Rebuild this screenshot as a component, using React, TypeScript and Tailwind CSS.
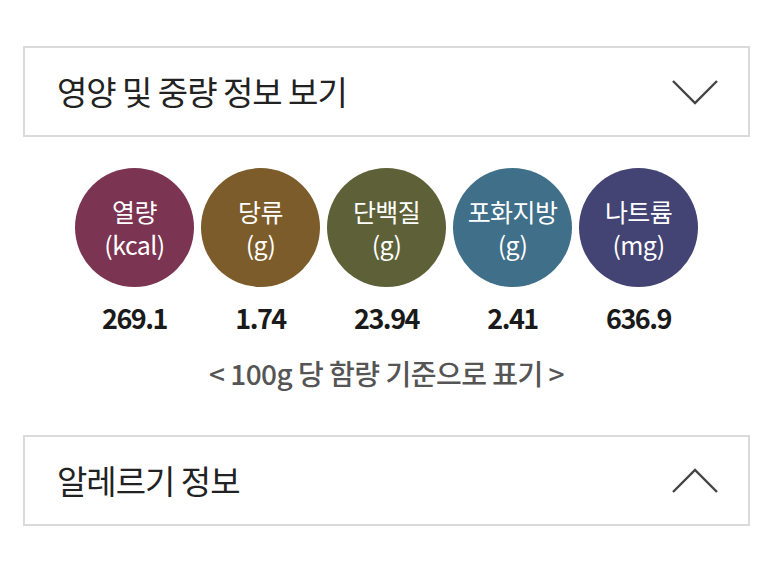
import React from "react";

type Nutrient = {
    name: string;
    unit: string;
    value: string;
    color: string;
};

const nutrients: Nutrient[] = [
    { name: "열량", unit: "(kcal)", value: "269.1", color: "bg-[#7b3452]" },
    { name: "당류", unit: "(g)", value: "1.74", color: "bg-[#7d5c2b]" },
    { name: "단백질", unit: "(g)", value: "23.94", color: "bg-[#5e6137]" },
    { name: "포화지방", unit: "(g)", value: "2.41", color: "bg-[#3f6f89]" },
    { name: "나트륨", unit: "(mg)", value: "636.9", color: "bg-[#434374]" },
];

const Chevron: React.FC<{ up?: boolean }> = ({ up }) => (
    <svg width="48" height="26" viewBox="0 0 48 26" fill="none">
        <path
            d={up ? "M2 24 L24 2 L46 24" : "M2 2 L24 24 L46 2"}
            stroke="#444"
            strokeWidth="2.4"
        />
    </svg>
);

const Header: React.FC<{ title: string; up?: boolean }> = ({ title, up }) => (
    <div className="h-[91px] border-2 border-[#dadada] flex items-center justify-between pl-[32px] pr-[29px]">
        <span className="text-[33px] text-[#222] tracking-[-1px]">{title}</span>
        <Chevron up={up} />
    </div>
);

export default function App() {
    return (
        <div
            className="w-[773px] h-[578px] bg-white px-[23px] pt-[46px]"
            style={{ fontFamily: '"Noto Sans CJK KR", "Noto Sans", sans-serif' }}
        >
            <Header title="영양 및 중량 정보 보기" />

            <div className="flex justify-center gap-[7px] mt-[31px]">
                {nutrients.map((n) => (
                    <div key={n.name} className="w-[119px] flex flex-col items-center">
                        <div className={`w-[119px] h-[119px] rounded-full ${n.color} flex flex-col items-center justify-center gap-[1px] text-white text-[25px] leading-[32px] tracking-[-0.6px]`}>
                            <span>{n.name}</span>
                            <span>{n.unit}</span>
                        </div>
                        <div className="mt-[13px] text-[27px] leading-[36px] font-bold text-[#1a1a1a] tracking-[-1.5px]">
                            {n.value}
                        </div>
                    </div>
                ))}
            </div>

            <div className="text-center mt-[17px] text-[28px] leading-[40px] font-medium text-[#555] tracking-[-0.5px]">
                &lt; 100g 당 함량 기준으로 표기 &gt;
            </div>

            <div className="mt-[42px]">
                <Header title="알레르기 정보" up />
            </div>
        </div>
    );
}
